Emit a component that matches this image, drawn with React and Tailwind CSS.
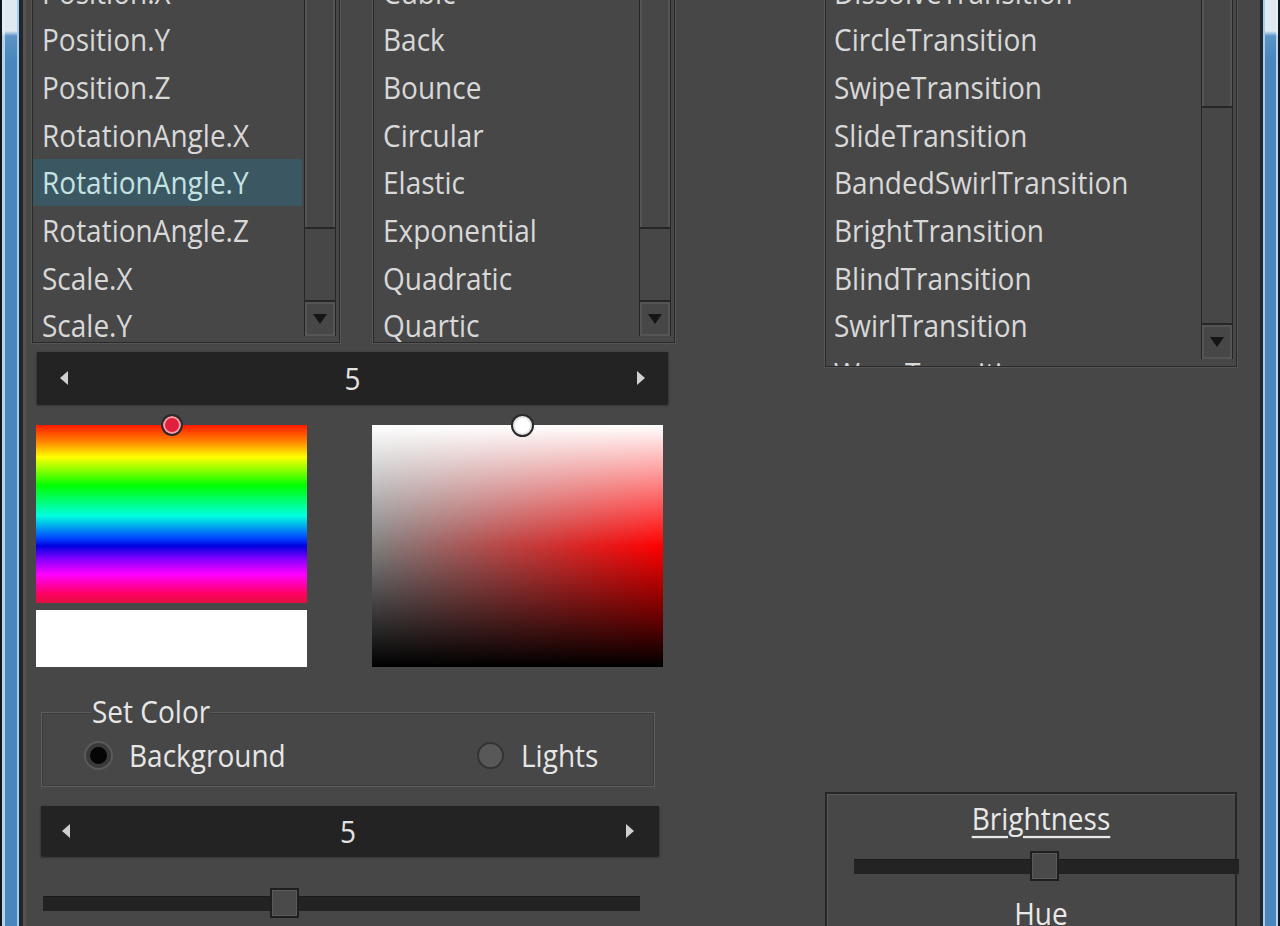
import React from "react";

const F = "font-['Open_Sans',sans-serif] inline-block scale-y-[1.12]";

function DownTri() {
  return (
    <svg width="16" height="12" viewBox="0 0 16 12">
      <polygon points="1,1 15,1 8,11" fill="#151515" />
    </svg>
  );
}

function Scrollbar({ thumb }) {
  return (
    <div className="flex h-full w-[32px] flex-col border-x border-[#262626]">
      <div
        className="shrink-0 border-b-2 border-[#262626] shadow-[inset_2px_0_0_#555,inset_-2px_0_0_#555]"
        style={{ height: thumb }}
      />
      <div className="flex-1" />
      <div className="flex h-[36px] shrink-0 items-center justify-center border-t-2 border-[#262626] shadow-[inset_0_2px_0_#555,inset_2px_0_0_#555,inset_-2px_0_0_#555,inset_0_-2px_0_#555]">
        <DownTri />
      </div>
    </div>
  );
}

function ListBox({ items, selected, thumb, className, pl, pb }) {
  return (
    <div
      className={`flex shrink-0 overflow-hidden border border-t-0 border-[#2a2a2a] shadow-[0_0_0_1px_#555] ${className}`}
    >
      <div className="relative flex-1 overflow-hidden">
        <div className="-mt-[32px] flex flex-col">
          {items.map((t, i) => (
            <div
              key={t}
              className={`flex h-[47.67px] shrink-0 items-center ${
                i === selected ? "mr-[2px] bg-[#3b5762] text-[#c4e2e2]" : "text-[#d8d8d8]"
              }`}
              style={{ paddingLeft: pl }}
            >
              <span className={`${F} origin-center text-[28px] leading-none whitespace-nowrap`}>{t}</span>
            </div>
          ))}
        </div>
      </div>
      <div className="mr-[3px]" style={{ paddingBottom: pb }}>
        <Scrollbar thumb={thumb} />
      </div>
    </div>
  );
}

function LeftArrow() {
  return (
    <svg width="10" height="14" viewBox="0 0 10 14">
      <polygon points="9,0 9,14 1,7" fill="#d0d0d0" />
    </svg>
  );
}
function RightArrow() {
  return (
    <svg width="10" height="14" viewBox="0 0 10 14">
      <polygon points="1,0 1,14 9,7" fill="#d0d0d0" />
    </svg>
  );
}

function Spinner({ className, px }) {
  return (
    <div
      className={`flex shrink-0 items-center justify-between bg-[#232323] shadow-[0_1px_2px_#1a1a1a] ${className}`}
      style={{ paddingLeft: px[0], paddingRight: px[1] }}
    >
      <LeftArrow />
      <span className={`${F} text-[28px] leading-none text-[#e2e2e2]`}>5</span>
      <RightArrow />
    </div>
  );
}

function Slider({ className, thumbLeft, trackClass }) {
  return (
    <div className={`relative h-[30px] shrink-0 ${className}`}>
      <div className={`absolute top-[8px] h-[15px] bg-[#232323] shadow-[inset_0_1px_0_#1a1a1a] ${trackClass}`} />
      <div
        className="absolute top-0 h-[30px] w-[29px] border-2 border-[#1f1f1f] bg-[#4a4a4a] shadow-[inset_0_0_0_1px_#5a5a5a]"
        style={{ left: thumbLeft }}
      />
    </div>
  );
}

export default function App() {
  const list1 = [
    "Position.X",
    "Position.Y",
    "Position.Z",
    "RotationAngle.X",
    "RotationAngle.Y",
    "RotationAngle.Z",
    "Scale.X",
    "Scale.Y",
  ];
  const list2 = ["Cubic", "Back", "Bounce", "Circular", "Elastic", "Exponential", "Quadratic", "Quartic"];
  const list3 = [
    "DissolveTransition",
    "CircleTransition",
    "SwipeTransition",
    "SlideTransition",
    "BandedSwirlTransition",
    "BrightTransition",
    "BlindTransition",
    "SwirlTransition",
    "WaveTransition",
  ];

  return (
    <div className="flex h-[926px] w-[1280px] overflow-hidden bg-[#474747]">
      {/* left window frame */}
      <div className="flex h-full w-[26px] shrink-0">
        <div className="w-[2px] bg-[#0f161c]" />
        <div className="w-[3px] bg-[linear-gradient(to_bottom,#e4eef6_0px,#e4eef6_32px,#b8d4ec_36px,#b8d4ec_100%)]" />
        <div className="w-[12px] bg-[linear-gradient(to_bottom,#dfe9f2_0px,#dfe9f2_31px,#5c94c6_36px,#4a86bc_60px,#4a86bc_100%)]" />
        <div className="w-[2px] bg-[#a9cbe8]" />
        <div className="w-[4px] bg-[#1b2733]" />
        <div className="w-[3px] bg-[#5b5149]" />
      </div>

      {/* content */}
      <div className="flex flex-1 overflow-hidden bg-[#474747]">
        {/* left column */}
        <div className="ml-[6px] flex w-[643px] shrink-0 flex-col">
          <div className="flex h-[343px] shrink-0 gap-[33px]">
            <ListBox items={list1} selected={4} thumb={229} className="w-[308px]" pl="9px" pb="6px" />
            <ListBox items={list2} selected={-1} thumb={229} className="w-[302px]" pl="9px" pb="6px" />
          </div>

          <Spinner className="ml-[5px] mt-[9px] h-[52px] w-[631px]" px={["22px", "22px"]} />

          <div className="mt-[21px] flex shrink-0">
            <div className="relative ml-[4px] flex w-[271px] flex-col">
              <div className="h-[178px] bg-[linear-gradient(to_bottom,#ff1a00_0%,#ff8000_9%,#ffff00_18%,#00ff00_34%,#00ffe0_51%,#0040ff_64%,#0000e0_68%,#8000ff_75%,#ff00ff_84%,#ff0060_95%,#e01040_100%)]" />
              <div className="mt-[7px] h-[57px] bg-white" />
              <div className="absolute left-[125px] top-[-11px] h-[22px] w-[22px] rounded-full border-2 border-[#2a2a2a] bg-[#e0203c] shadow-[inset_0_0_0_2px_#f4a0a8]" />
            </div>
            <div className="relative ml-[65px] h-[242px] w-[291px] bg-[linear-gradient(to_right,#808080,#ff0000)]">
              <div className="h-full w-full bg-[linear-gradient(to_bottom,#ffffff_0%,rgba(255,255,255,0)_50%,rgba(0,0,0,0)_50%,#000_100%)]" />
              <div className="absolute left-[139px] top-[-11px] h-[23px] w-[23px] rounded-full border-2 border-[#2a2a2a] bg-white shadow-[inset_0_0_0_2px_#e8e8e8]" />
            </div>
          </div>

          {/* group box */}
          <div className="relative ml-[9px] mt-[45px] h-[75px] w-[614px] shrink-0 border border-[#5d5d5d] shadow-[inset_0_0_0_1px_#3c3c3c]">
            <span
              className={`${F} absolute left-[49px] top-[-16px] bg-[#474747] px-[1px] text-[28px] leading-none text-[#e6e6e6]`}
            >
              Set Color
            </span>
            <div className="mt-[28px] flex h-[28px] items-center pl-[44px]">
              <div className="flex w-[391px] items-center">
                <div className="flex h-[25px] w-[25px] items-center justify-center rounded-full bg-[#3a3a3a] shadow-[0_0_0_2px_#5a5a5a]">
                  <div className="h-[17px] w-[17px] rounded-full bg-[#050505]" />
                </div>
                <span className={`${F} ml-[18px] text-[28px] leading-none text-[#e6e6e6]`}>Background</span>
              </div>
              <div className="flex items-center">
                <div className="h-[27px] w-[27px] rounded-full border-2 border-[#333] bg-[#585858]" />
                <span className={`${F} ml-[17px] text-[28px] leading-none text-[#e6e6e6]`}>Lights</span>
              </div>
            </div>
          </div>

          <Spinner className="ml-[9px] mt-[19px] h-[50px] w-[618px]" px={["20px", "24px"]} />

          <Slider className="ml-[11px] mt-[32px] w-[597px]" thumbLeft="227px" trackClass="left-0 w-[597px]" />
        </div>

        {/* right column */}
        <div className="ml-[150px] flex w-[412px] shrink-0 flex-col">
          <ListBox items={list3} selected={-1} thumb={108} className="h-[367px] w-[412px]" pl="8px" pb="7px" />

          <div className="mt-[425px] h-[200px] w-[412px] shrink-0 border-2 border-b-0 border-[#262626] shadow-[inset_1px_1px_0_#5a5a5a]">
            <div className="mt-[10px] flex justify-center pl-[20px]">
              <span className={`${F} text-[28px] leading-none text-[#e8e8e8] underline underline-offset-[5px] decoration-[2px]`}>
                Brightness
              </span>
            </div>
            <Slider className="ml-[27px] mt-[19px]" thumbLeft="176px" trackClass="left-0 w-[385px]" />
            <div className="mt-[18px] flex justify-center pl-[20px]">
              <span className={`${F} text-[28px] leading-none text-[#e8e8e8]`}>Hue</span>
            </div>
          </div>
        </div>
      </div>

      {/* right window frame */}
      <div className="flex h-full w-[22px] shrink-0">
        <div className="w-[2px] bg-[#4c4540]" />
        <div className="w-[3px] bg-[#1b2733]" />
        <div className="w-[2px] bg-[#a9cbe8]" />
        <div className="w-[11px] bg-[linear-gradient(to_bottom,#dfe9f2_0px,#dfe9f2_31px,#5c94c6_36px,#4a86bc_60px,#4a86bc_100%)]" />
        <div className="w-[2px] bg-[linear-gradient(to_bottom,#e4eef6_0px,#e4eef6_32px,#b8d4ec_36px,#b8d4ec_100%)]" />
        <div className="w-[2px] bg-[#0f161c]" />
      </div>
    </div>
  );
}
